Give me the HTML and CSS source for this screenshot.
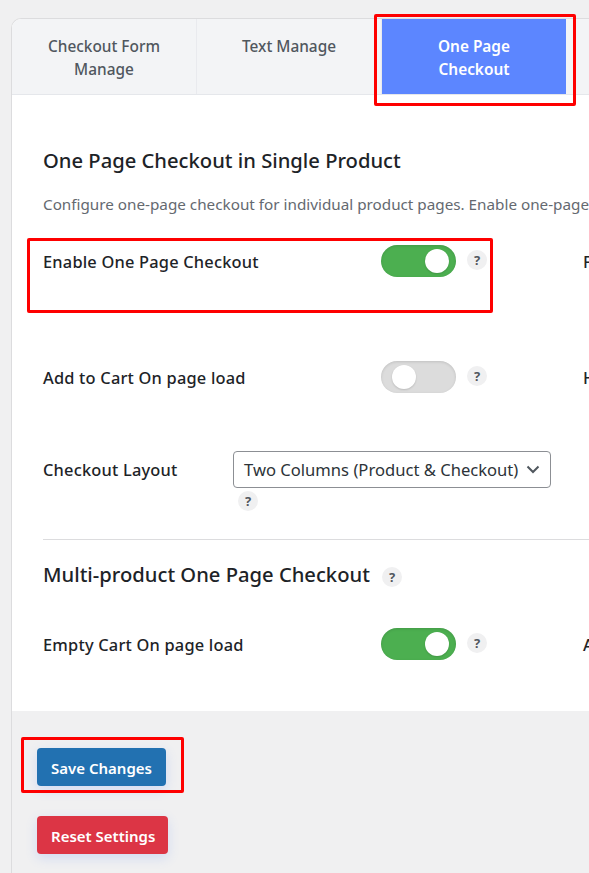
FILE: index.html
```html
<!DOCTYPE html>
<html lang="en">
<head>
    <meta charset="UTF-8">
    <meta name="viewport" content="width=device-width, initial-scale=1.0">
    <title>One Page Checkout</title>
    <link rel="stylesheet" href="styles.css">
</head>
<body>
    <div class="card">
        <div class="tabs">
            <div class="tab">Checkout Form Manage</div>
            <div class="tab">Text Manage</div>
            <div class="tab active">One Page Checkout</div>
            <div class="tab-rest"></div>
        </div>
        <div class="panel">
            <h2 class="section-title">One Page Checkout in Single Product</h2>
            <p class="section-desc">Configure one-page checkout for individual product pages. Enable one-page</p>

            <div class="row row-first">
                <div class="field">
                    <span class="label">Enable One Page Checkout</span>
                    <span class="switch on"><span class="knob"></span></span>
                    <span class="help">?</span>
                </div>
                <div class="field-next"><span class="label">F</span></div>
            </div>
            <div class="row row-second">
                <div class="field">
                    <span class="label">Add to Cart On page load</span>
                    <span class="switch"><span class="knob"></span></span>
                    <span class="help">?</span>
                </div>
                <div class="field-next"><span class="label">H</span></div>
            </div>
            <div class="row-layout">
                <span class="label">Checkout Layout</span>
                <div class="select-wrap">
                    <div class="select">
                        <span>Two Columns (Product &amp; Checkout)</span>
                        <svg class="chevron" width="14" height="9" viewBox="0 0 14 9"><path d="M1.5 1.5 7 7l5.5-5.5" fill="none" stroke="#50575e" stroke-width="2"/></svg>
                    </div>
                    <span class="help">?</span>
                </div>
            </div>

            <hr class="divider">

            <h2 class="section-title sub">Multi-product One Page Checkout <span class="help">?</span></h2>

            <div class="row row-third">
                <div class="field">
                    <span class="label">Empty Cart On page load</span>
                    <span class="switch on"><span class="knob"></span></span>
                    <span class="help">?</span>
                </div>
                <div class="field-next"><span class="label">A</span></div>
            </div>
        </div>
        <div class="actions">
            <button class="btn btn-save">Save Changes</button>
            <button class="btn btn-reset">Reset Settings</button>
        </div>
    </div>

    <div class="mark mark-tab"></div>
    <div class="mark mark-enable"></div>
    <div class="mark mark-save"></div>
</body>
</html>
```

FILE: styles.css
```css
html, body {
    height: 100%;
}
body {
    margin: 0;
    padding: 18px 0 0 11px;
    box-sizing: border-box;
    width: 589px;
    height: 873px;
    overflow: hidden;
    position: relative;
    background-color: #f0f0f1;
    font-family: "Noto Sans", Arial, sans-serif;
    color: #1d2327;
}
.card {
    width: 900px;
    border: 1px solid #dcdcde;
    border-bottom: none;
    border-right: none;
    border-radius: 10px 0 0 0;
    overflow: hidden;
    background: #fff;
}
.tabs {
    display: flex;
    height: 76px;
    box-sizing: border-box;
    background-color: #f3f4f6;
    border-bottom: 1px solid #e5e7eb;
}
.tab {
    width: 185px;
    box-sizing: border-box;
    padding: 16px 30px 0;
    border-right: 1px solid #e9eaee;
    text-align: center;
    font-size: 15.4px;
    font-weight: 500;
    line-height: 23px;
    color: #50575e;
}
.tab.active {
    width: 184px;
    height: 75px;
    padding: 16px 40px 0;
    border-right: none;
    background-color: #5c86ff;
    color: #fff;
    font-weight: 600;
}
.tab-rest {
    flex: 1;
}
.panel {
    height: 616px;
    box-sizing: border-box;
    padding: 52px 0 0 31px;
    background: #fff;
}
.section-title {
    margin: 0;
    font-size: 20.2px;
    font-weight: 500;
    line-height: 26px;
    color: #1d2327;
}
.section-desc {
    margin: 20px 0 0;
    font-size: 15.25px;
    line-height: 22px;
    color: #646970;
    white-space: nowrap;
}
.row {
    display: flex;
}
.row-first {
    margin-top: 30px;
}
.row-second {
    margin-top: 82px;
}
.row-third {
    margin-top: 41px;
}
.field {
    width: 540px;
    display: flex;
    align-items: flex-start;
    height: 33px;
    position: relative;
}
.label {
    font-size: 16.4px;
    font-weight: 500;
    letter-spacing: 0.2px;
    line-height: 34px;
    color: #1d2327;
    white-space: nowrap;
}
.field .label {
    width: 338px;
    flex: none;
}
.switch {
    width: 75px;
    height: 32px;
    flex: none;
    box-sizing: border-box;
    padding: 4px;
    border-radius: 16px;
    background-color: #dcdcdc;
    box-shadow: inset 0 1px 3px rgba(0, 0, 0, 0.12);
    display: flex;
}
.switch.on {
    background-color: #4caf50;
    justify-content: flex-end;
    padding-right: 7px;
}
.knob {
    width: 24px;
    height: 24px;
    border-radius: 50%;
    background: #fff;
    box-shadow: 0 1px 2px rgba(0, 0, 0, 0.15);
}
.switch:not(.on) .knob {
    margin-left: 7px;
}
.help {
    width: 20px;
    height: 20px;
    border-radius: 50%;
    background-color: #f0f0f1;
    color: #50575e;
    font-size: 13px;
    font-weight: 700;
    line-height: 20px;
    text-align: center;
    display: inline-block;
    flex: none;
}
.field .help {
    margin: 5px 0 0 11px;
}
.row-layout {
    display: flex;
    margin-top: 56px;
}
.row-layout .label {
    width: 190px;
    flex: none;
    line-height: 38px;
}
.select-wrap {
    width: 318px;
    flex: none;
}
.select {
    height: 37px;
    box-sizing: border-box;
    border: 1px solid #8c8f94;
    border-radius: 4px;
    padding: 0 10px;
    display: flex;
    align-items: center;
    justify-content: space-between;
    font-size: 16.6px;
    color: #2c3338;
    white-space: nowrap;
    background: #fff;
}
.select-wrap .help {
    margin: 3px 0 0 5px;
    vertical-align: top;
}
.divider {
    margin: 28px 0 0;
    border: none;
    border-top: 1px solid #dcdcde;
}
.section-title.sub {
    margin-top: 21px;
}
.section-title .help {
    margin-left: 7px;
}
.actions {
    height: 170px;
    box-sizing: border-box;
    margin-left: 0;
    padding: 37px 0 0 25px;
    background-color: #f0f0f1;
    display: flex;
    flex-direction: column;
    align-items: flex-start;
    gap: 30px;
}
.btn {
    height: 38px;
    box-sizing: border-box;
    padding: 1px 14px 0;
    border: none;
    border-radius: 4px;
    font-family: inherit;
    font-size: 15px;
    font-weight: 600;
    color: #fff;
    box-shadow: 0 4px 12px rgba(92, 134, 255, 0.2);
}
.btn-save {
    background-color: #2271b1;
}
.btn-reset {
    background-color: #dc3545;
    padding-right: 13px;
}
/* red annotation boxes drawn over the screenshot */
.mark {
    position: absolute;
    box-sizing: border-box;
    border: 3px solid #fe0000;
    border-radius: 2px;
}
.mark-tab {
    left: 374px;
    top: 14px;
    width: 202px;
    height: 92px;
}
.mark-enable {
    left: 27px;
    top: 238px;
    width: 466px;
    height: 75px;
}
.mark-save {
    left: 21px;
    top: 737px;
    width: 163px;
    height: 56px;
}
```
